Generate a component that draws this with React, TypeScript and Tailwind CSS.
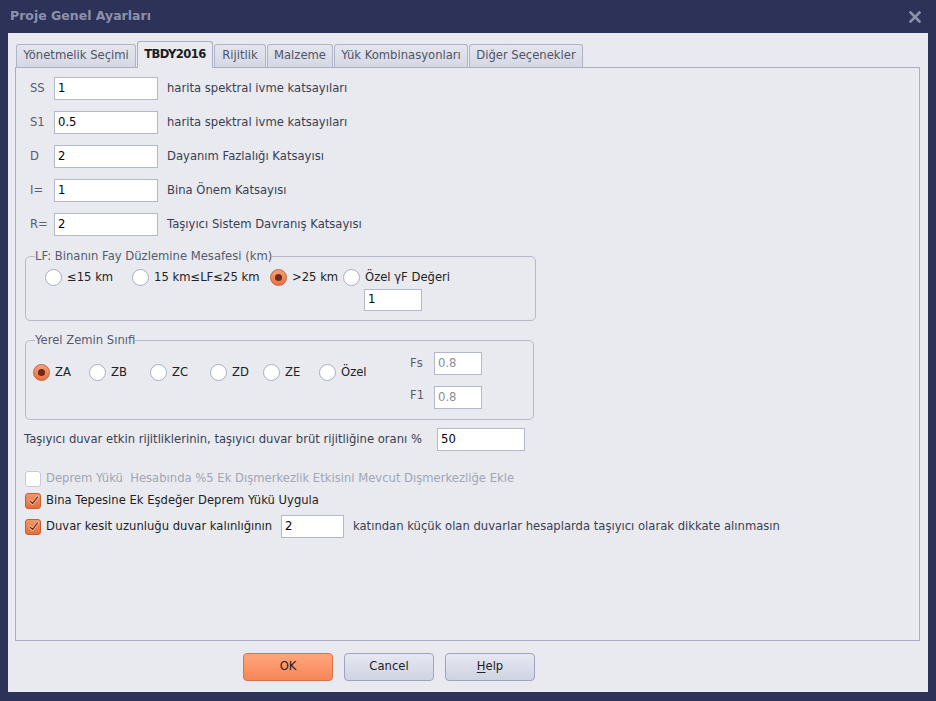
import React from 'react'

const font = { fontFamily: '"DejaVu Sans", Verdana, sans-serif' }

function TextBox({ value, w, h = 23, muted = false }: { value: string; w: number; h?: number; muted?: boolean }) {
  return (
    <div
      className={`flex items-center bg-white border border-[#b4b8cc] pl-[3px] text-[11.6px] ${muted ? 'text-[#8a8d99]' : 'text-black'}`}
      style={{ width: w, height: h }}
    >
      {value}
    </div>
  )
}

function Radio({ checked = false }: { checked?: boolean }) {
  if (checked) {
    return (
      <span className="w-[17px] h-[17px] rounded-full border border-[#c9633d] bg-gradient-to-b from-[#f6a077] to-[#e8703f] flex items-center justify-center shrink-0">
        <span className="w-[7px] h-[7px] rounded-full bg-[#6e2a17]" />
      </span>
    )
  }
  return <span className="w-[17px] h-[17px] rounded-full border border-[#a9adc3] bg-white shrink-0" />
}

function RadioItem({ label, w, checked = false }: { label: string; w: number; checked?: boolean }) {
  return (
    <div className="flex items-center gap-[5px] text-[11.6px] text-[#222]" style={{ width: w }}>
      <Radio checked={checked} />
      <span className="whitespace-nowrap">{label}</span>
    </div>
  )
}

function CheckBox({ checked = false, disabled = false }: { checked?: boolean; disabled?: boolean }) {
  if (checked) {
    return (
      <span className="w-[16px] h-[16px] rounded-[3px] border border-[#c45e36] bg-gradient-to-b from-[#f3956a] to-[#e46d3c] flex items-center justify-center shrink-0">
        <svg width="11" height="11" viewBox="0 0 11 11">
          <path d="M2 6 L4.5 8.5 L9.5 2" fill="none" stroke="#fbe3d6" strokeWidth="2.6" strokeLinecap="round" strokeLinejoin="round" />
          <path d="M2 6 L4.5 8.5 L9.5 2" fill="none" stroke="#6b2a14" strokeWidth="1.3" strokeLinecap="round" strokeLinejoin="round" />
        </svg>
      </span>
    )
  }
  return (
    <span className={`w-[16px] h-[16px] rounded-[3px] border bg-white shrink-0 ${disabled ? 'border-[#c8cbd8]' : 'border-[#a9adc3]'}`} />
  )
}

const params = [
  { label: 'SS', value: '1', desc: 'harita spektral ivme katsayıları' },
  { label: 'S1', value: '0.5', desc: 'harita spektral ivme katsayıları' },
  { label: 'D', value: '2', desc: 'Dayanım Fazlalığı Katsayısı' },
  { label: 'I=', value: '1', desc: 'Bina Önem Katsayısı' },
  { label: 'R=', value: '2', desc: 'Taşıyıcı Sistem Davranış Katsayısı' },
]

const tabs = [
  { name: 'Yönetmelik Seçimi', w: 120 },
  { name: 'TBDY2016', w: 76, active: true },
  { name: 'Rijitlik', w: 52 },
  { name: 'Malzeme', w: 66 },
  { name: 'Yük Kombinasyonları', w: 134 },
  { name: 'Diğer Seçenekler', w: 114 },
]

export default function App() {
  return (
    <div className="w-[936px] h-[701px] bg-[#2c3258] flex flex-col" style={font}>
      {/* title bar */}
      <div className="h-[33px] flex items-center justify-between pl-[10px] pr-[15px] shrink-0">
        <span className="text-[12.5px] font-bold text-[#8c91ae]">Proje Genel Ayarları</span>
        <svg width="12" height="12" viewBox="0 0 12 12">
          <path d="M1.5 1.5 L10.5 10.5 M10.5 1.5 L1.5 10.5" stroke="#8c91ae" strokeWidth="2.6" strokeLinecap="square" />
        </svg>
      </div>

      <div className="flex-1 mx-[8px] mb-[9px] bg-[#e8eaf0] flex flex-col">
        <div className="flex-1 flex flex-col ml-[7px] mr-[8px] pt-[7px]">
          {/* tabs */}
          <div className="flex items-end gap-[1px] pl-[1px] h-[27px] relative z-10">
            {tabs.map((t) =>
              t.active ? (
                <div
                  key={t.name}
                  className="h-[27px] -mb-px border border-b-0 border-[#a9adc5] rounded-t-[3px] bg-[#e8eaf0] flex items-center justify-center text-[11.6px] font-bold text-[#1c1c22] tracking-[-0.6px]"
                  style={{ width: t.w }}
                >
                  {t.name}
                </div>
              ) : (
                <div
                  key={t.name}
                  className="h-[23px] border border-b-0 border-[#b0b4ca] rounded-t-[3px] bg-gradient-to-b from-[#e4e6ee] to-[#d5d8e3] flex items-center justify-center text-[11.6px] text-[#4f5468] whitespace-nowrap"
                  style={{ width: t.w }}
                >
                  {t.name}
                </div>
              )
            )}
          </div>

          {/* panel */}
          <div className="flex-1 border border-[#a9adc5] bg-[#e8eaf0] pt-[9px] flex flex-col">
            <div className="flex flex-col gap-[11px] pl-[14px]">
              {params.map((p) => (
                <div key={p.label} className="flex items-center h-[23px]">
                  <span className="w-[24px] text-[11.6px] text-[#5a5e70]">{p.label}</span>
                  <TextBox value={p.value} w={104} />
                  <span className="ml-[9px] text-[11.6px] text-[#3a3e52]">{p.desc}</span>
                </div>
              ))}
            </div>

            {/* LF group */}
            <fieldset className="ml-[9px] mt-[13px] w-[511px] border border-[#b5b9cf] rounded-[5px]">
              <legend className="ml-[9px] text-[11.6px] text-[#555a6e] leading-[15px]">LF: Binanın Fay Düzlemine Mesafesi (km)</legend>
              <div className="flex pl-[19px] pt-[5px] pb-[9px]">
                <div className="h-[17px] flex">
                  <RadioItem label="≤15 km" w={87} />
                  <RadioItem label="15 km≤LF≤25 km" w={138} />
                  <RadioItem label=">25 km" w={73} checked />
                </div>
                <div className="flex flex-col">
                  <div className="h-[17px] flex">
                    <RadioItem label="Özel γF Değeri" w={130} />
                  </div>
                  <div className="mt-[3px] ml-[21px]">
                    <TextBox value="1" w={58} h={22} />
                  </div>
                </div>
              </div>
            </fieldset>

            {/* Yerel Zemin group */}
            <fieldset className="ml-[9px] mt-[12px] w-[509px] border border-[#b5b9cf] rounded-[5px]">
              <legend className="ml-[9px] text-[11.6px] text-[#555a6e] leading-[15px]">Yerel Zemin Sınıfi</legend>
              <div className="flex pl-[7px] pt-[4px] pb-[10px]">
                <div className="h-[17px] flex mt-[12px] w-[377px]">
                  <RadioItem label="ZA" w={56} checked />
                  <RadioItem label="ZB" w={61} />
                  <RadioItem label="ZC" w={60} />
                  <RadioItem label="ZD" w={53} />
                  <RadioItem label="ZE" w={56} />
                  <RadioItem label="Özel" w={91} />
                </div>
                <div className="flex flex-col gap-[11px]">
                  <div className="flex items-center h-[23px]">
                    <span className="w-[24px] text-[11.6px] text-[#5a5e70]">Fs</span>
                    <TextBox value="0.8" w={48} muted />
                  </div>
                  <div className="flex items-center h-[23px]">
                    <span className="w-[24px] text-[11.6px] text-[#5a5e70] -mt-[4px]">F1</span>
                    <TextBox value="0.8" w={48} muted />
                  </div>
                </div>
              </div>
            </fieldset>

            <div className="flex items-center h-[23px] mt-[8px] ml-[8px]">
              <span className="w-[413px] text-[11.6px] text-[#3a3e52] whitespace-nowrap">Taşıyıcı duvar etkin rijitliklerinin, taşıyıcı duvar brüt rijitliğine oranı %</span>
              <TextBox value="50" w={88} />
            </div>

            <div className="flex items-center h-[17px] mt-[19px] ml-[9px] gap-[5px]">
              <CheckBox disabled />
              <span className="text-[11.6px] text-[#a2a5b3]">Deprem Yükü&nbsp; Hesabında %5 Ek Dışmerkezlik Etkisini Mevcut Dışmerkezliğe Ekle</span>
            </div>
            <div className="flex items-center h-[17px] mt-[5px] ml-[9px] gap-[5px]">
              <CheckBox checked />
              <span className="text-[11.6px] text-[#1e1e24]">Bina Tepesine Ek Eşdeğer Deprem Yükü Uygula</span>
            </div>
            <div className="flex items-center h-[23px] mt-[6px] ml-[9px]">
              <CheckBox checked />
              <span className="w-[240px] pl-[5px] text-[11.6px] text-[#1e1e24] whitespace-nowrap">Duvar kesit uzunluğu duvar kalınlığının</span>
              <TextBox value="2" w={63} />
              <span className="ml-[9px] text-[11.6px] text-[#3a3e52] whitespace-nowrap">katından küçük olan duvarlar hesaplarda taşıyıcı olarak dikkate alınmasın</span>
            </div>
          </div>
        </div>

        {/* buttons */}
        <div className="h-[51px] flex items-start pt-[12px] pl-[235px] gap-[11px] shrink-0">
          <button className="w-[90px] h-[28px] rounded-[4px] border border-[#d27650] bg-gradient-to-b from-[#ffa57c] to-[#f68656] text-[11.6px] text-[#2a1a14]">
            OK
          </button>
          <button className="w-[90px] h-[28px] rounded-[4px] border border-[#9ea3bf] bg-gradient-to-b from-[#e6e8f1] to-[#cfd3e2] text-[11.6px] text-[#1e1e28]">
            Cancel
          </button>
          <button className="w-[90px] h-[28px] rounded-[4px] border border-[#9ea3bf] bg-gradient-to-b from-[#e6e8f1] to-[#cfd3e2] text-[11.6px] text-[#1e1e28]">
            <span className="underline underline-offset-2">H</span>elp
          </button>
        </div>
      </div>
    </div>
  )
}
